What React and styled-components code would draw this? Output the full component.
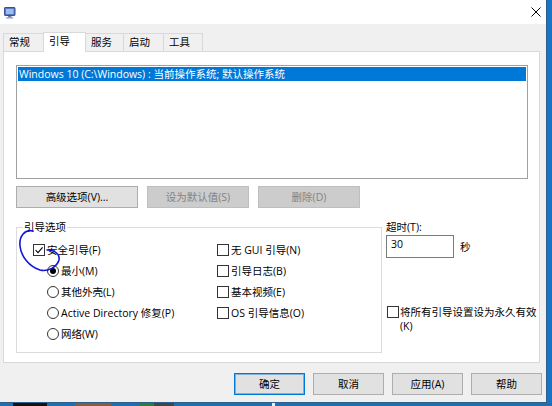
import React from "react";
import styled, { createGlobalStyle, css } from "styled-components";

const FONT = `"Segoe UI", "Open Sans", "Noto Sans CJK SC", sans-serif`;

const GlobalStyle = createGlobalStyle`
  html, body { margin: 0; padding: 0; }
  body { width: 552px; height: 406px; overflow: hidden; background: #1a74c6; }
  #root { width: 552px; height: 406px; }
`;

const Desktop = styled.div`
  position: relative;
  width: 552px;
  height: 406px;
  display: flex;
  flex-direction: column;
  background: #1a74c6;
  font-family: ${FONT};
  font-size: 10.5px;
  color: #000;
`;

const WindowRow = styled.div`
  display: flex;
  flex: 1;
`;

const Window = styled.div`
  width: 546px;
  height: 402px;
  display: flex;
  flex-direction: column;
  background: #f0f0f0;
  border-right: 1px solid #2d5e8c;
  border-bottom: 1px solid #2d5e8c;
`;

const TitleBar = styled.div`
  height: 24px;
  flex: none;
  display: flex;
  align-items: center;
  justify-content: space-between;
  padding: 0 5px 0 4px;
  background: #fff;
`;

const Body = styled.div`
  flex: 1;
  display: flex;
  flex-direction: column;
  padding: 8px 4px 0 3px;
`;

const TabStrip = styled.div`
  display: flex;
  align-items: flex-end;
  height: 19px;
`;

const Tab = styled.div`
  box-sizing: border-box;
  width: ${(p) => p.$w}px;
  height: 18px;
  border: 1px solid #d9d9d9;
  border-bottom: none;
  background: #f0f0f0;
  padding-left: 5px;
  line-height: 17px;
  white-space: nowrap;
  & + & { margin-left: -1px; }
  ${(p) =>
    p.$active &&
    css`
      height: 20px;
      background: #fff;
      margin-bottom: -1px;
      position: relative;
      z-index: 1;
      line-height: 16px;
    `}
`;

const Panel = styled.div`
  box-sizing: border-box;
  height: 312px;
  margin-right: 2px;
  background: #fff;
  border: 1px solid #d9d9d9;
  padding: 13px 11px 0 12px;
  display: flex;
  flex-direction: column;
`;

const ListBox = styled.div`
  box-sizing: border-box;
  height: 114px;
  border: 1px solid #a0a0a0;
  padding: 1px;
  background: #fff;
`;

const ListItem = styled.div`
  height: 14px;
  line-height: 14px;
  padding-left: 1px;
  white-space: nowrap;
  ${(p) =>
    p.$selected &&
    css`
      background: #0078d7;
      color: #fff;
    `}
`;

const ButtonRow = styled.div`
  display: flex;
  gap: 9px;
  margin-top: 7px;
`;

const Button = styled.button`
  box-sizing: border-box;
  width: ${(p) => p.$w}px;
  height: 22px;
  margin: 0;
  padding: 0;
  border: 1px solid #adadad;
  background: #e1e1e1;
  color: #000;
  font: inherit;
  line-height: 20px;
  text-align: center;
  white-space: nowrap;
  &:disabled {
    background: #cccccc;
    border-color: #bfbfbf;
    color: #838383;
  }
  ${(p) =>
    p.$default &&
    css`
      border-color: #0078d7;
      box-shadow: inset 0 0 0 1px rgba(0, 120, 215, 0.45);
    `}
`;

const Lower = styled.div`
  display: flex;
  margin-top: 12px;
`;

const Group = styled.fieldset`
  box-sizing: border-box;
  flex: none;
  width: 366px;
  margin: 0;
  padding: 5px 0 8px 0;
  border: 1px solid #dcdcdc;
  min-inline-size: 0;
`;

const Legend = styled.legend`
  margin-left: 6px;
  padding: 0 1px;
  line-height: 14px;
`;

const Columns = styled.div`
  display: flex;
  padding-left: 16px;
`;

const Column = styled.div`
  display: flex;
  flex-direction: column;
  width: ${(p) => (p.$w ? `${p.$w}px` : "auto")};
`;

const Option = styled.div`
  display: flex;
  align-items: center;
  height: 21px;
  padding-left: ${(p) => p.$indent || 0}px;
  white-space: nowrap;
`;

const Box = styled.span`
  box-sizing: border-box;
  flex: none;
  width: 12px;
  height: 12px;
  margin-right: 2px;
  border: 1px solid #333;
  background: #fff;
  display: flex;
  align-items: center;
  justify-content: center;
`;

const Radio = styled.span`
  box-sizing: border-box;
  flex: none;
  width: 12px;
  height: 12px;
  margin-right: 2px;
  border: 1px solid #333;
  border-radius: 50%;
  background: #fff;
  display: flex;
  align-items: center;
  justify-content: center;
  &::after {
    content: "";
    width: 6px;
    height: 6px;
    border-radius: 50%;
    background: ${(p) => (p.$on ? "#000" : "transparent")};
  }
`;

const TimeoutCol = styled.div`
  display: flex;
  flex-direction: column;
  margin-left: 4px;
  flex: 1;
  min-width: 0;
`;

const Label = styled.div`
  line-height: 14px;
`;

const InputRow = styled.div`
  display: flex;
  align-items: center;
  gap: 6px;
  margin-top: 1px;
`;

const TextBox = styled.div`
  box-sizing: border-box;
  width: 68px;
  height: 23px;
  border: 1px solid #7a7a7a;
  background: #fff;
  padding: 1px 4px 0;
  line-height: 14px;
`;

const PermanentOption = styled.div`
  display: flex;
  align-items: flex-start;
  margin-top: 47px;
  margin-left: 1px;
  line-height: 14px;
  white-space: nowrap;
  ${Box} {
    margin-top: 1px;
    margin-right: 1px;
  }
`;

const Footer = styled.div`
  display: flex;
  justify-content: flex-end;
  gap: 8px;
  margin-top: 10px;
`;

const Taskbar = styled.div`
  display: flex;
  height: 3px;
  background: #1f6fae;
`;

const TaskSeg = styled.span`
  width: ${(p) => p.$w}px;
  margin-left: ${(p) => p.$gap}px;
  background: ${(p) => p.$c};
`;

const Annotation = styled.svg`
  position: absolute;
  left: 0;
  top: 0;
  pointer-events: none;
`;

const CheckMark = () => (
  <svg width="10" height="10" viewBox="0 0 10 10">
    <path d="M1.6 5.2 L4 7.6 L8.6 2.4" fill="none" stroke="#000" strokeWidth="1.1" />
  </svg>
);

const AppIcon = () => (
  <svg width="12" height="13" viewBox="0 0 12 13">
    <rect x="0.5" y="1.5" width="10.5" height="8" rx="0.6" fill="#6276c0" stroke="#404c8c" />
    <rect x="2" y="3" width="7.5" height="5" fill="#8ec4f2" />
    <path d="M4 10 h3.5 v1.3 h-3.5z" fill="#6f7aa8" />
    <rect x="2.2" y="11.3" width="7" height="1.2" fill="#8d92b8" />
  </svg>
);

const CloseIcon = () => (
  <svg width="10" height="10" viewBox="0 0 10 10">
    <path d="M0.5 0.5 L9.5 9.5 M9.5 0.5 L0.5 9.5" stroke="#000" strokeWidth="1" />
  </svg>
);

const Check = ({ checked, children, indent }) => (
  <Option $indent={indent}>
    <Box>{checked && <CheckMark />}</Box>
    {children}
  </Option>
);

const RadioOption = ({ on, children }) => (
  <Option $indent={14}>
    <Radio $on={on} />
    {children}
  </Option>
);

const tabs = [
  { label: "常规", w: 41 },
  { label: "引导", w: 43, active: true },
  { label: "服务", w: 39 },
  { label: "启动", w: 41 },
  { label: "工具", w: 40 },
];

const taskSegs = [
  { gap: 13, w: 34, c: "#111" },
  { gap: 28, w: 36, c: "#8a5a3a" },
  { gap: 28, w: 15, c: "#2e7d32" },
  { gap: 0, w: 20, c: "#444" },
  { gap: 98, w: 3, c: "#e8f2fb" },
];

export default function App() {
  return (
    <>
      <GlobalStyle />
      <Desktop>
        <WindowRow>
          <Window>
            <TitleBar>
              <AppIcon />
              <CloseIcon />
            </TitleBar>
            <Body>
              <TabStrip>
                {tabs.map((t) => (
                  <Tab key={t.label} $w={t.w} $active={t.active}>
                    {t.label}
                  </Tab>
                ))}
              </TabStrip>
              <Panel>
                <ListBox>
                  <ListItem $selected>
                    Windows 10 (C:\Windows) : 当前操作系统; 默认操作系统
                  </ListItem>
                </ListBox>
                <ButtonRow>
                  <Button $w={122}>高级选项(V)...</Button>
                  <Button $w={102} disabled>
                    设为默认值(S)
                  </Button>
                  <Button $w={102} disabled>
                    删除(D)
                  </Button>
                </ButtonRow>
                <Lower>
                  <Group>
                    <Legend>引导选项</Legend>
                    <Columns>
                      <Column $w={184}>
                        <Check checked>安全引导(F)</Check>
                        <RadioOption on>最小(M)</RadioOption>
                        <RadioOption>其他外壳(L)</RadioOption>
                        <RadioOption>Active Directory 修复(P)</RadioOption>
                        <RadioOption>网络(W)</RadioOption>
                      </Column>
                      <Column>
                        <Check>无 GUI 引导(N)</Check>
                        <Check>引导日志(B)</Check>
                        <Check>基本视频(E)</Check>
                        <Check>OS 引导信息(O)</Check>
                      </Column>
                    </Columns>
                  </Group>
                  <TimeoutCol>
                    <Label>超时(T):</Label>
                    <InputRow>
                      <TextBox>30</TextBox>
                      <span>秒</span>
                    </InputRow>
                    <PermanentOption>
                      <Box />
                      <span>
                        将所有引导设置设为永久有效
                        <br />
                        (K)
                      </span>
                    </PermanentOption>
                  </TimeoutCol>
                </Lower>
              </Panel>
              <Footer>
                <Button $w={71} $default>
                  确定
                </Button>
                <Button $w={71}>取消</Button>
                <Button $w={71}>应用(A)</Button>
                <Button $w={71}>帮助</Button>
              </Footer>
            </Body>
          </Window>
        </WindowRow>
        <Taskbar>
          {taskSegs.map((s, i) => (
            <TaskSeg key={i} $w={s.w} $gap={s.gap} $c={s.c} />
          ))}
        </Taskbar>
        <Annotation width="552" height="406" viewBox="0 0 552 406">
          <path
            d="M33 231 C25 229 19 236 20 246 C21 257 30 267 40 270 C48 272 57 267 59 260 C60 254 55 250 47 250"
            fill="none"
            stroke="#1515d8"
            strokeWidth="1.6"
            strokeLinecap="round"
          />
        </Annotation>
      </Desktop>
    </>
  );
}
